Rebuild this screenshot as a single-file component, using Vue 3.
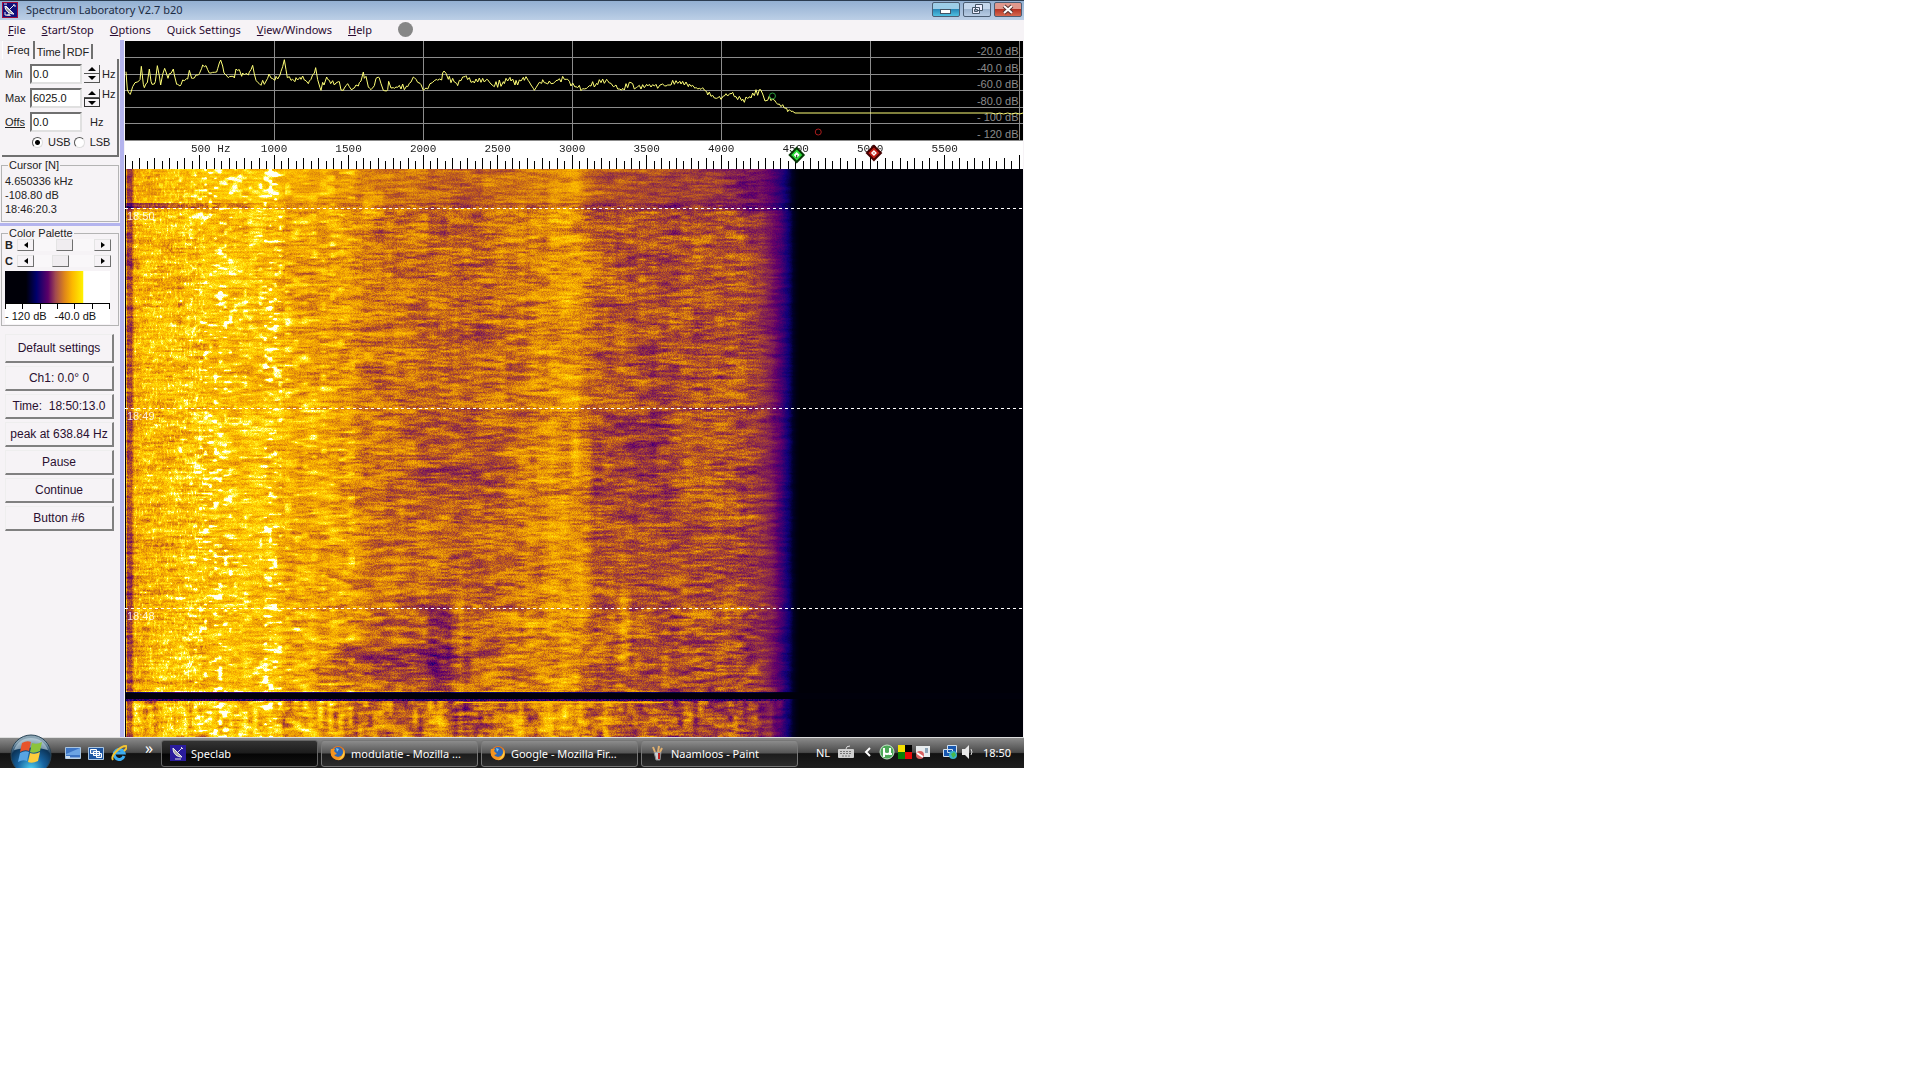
<script setup>
import { ref, onMounted } from "vue";

const menus = [
  { key: "F", rest: "ile" },
  { key: "S", rest: "tart/Stop" },
  { key: "O", rest: "ptions" },
  { key: "", rest: "Quick Settings" },
  { key: "V", rest: "iew/Windows" },
  { key: "H", rest: "elp" },
];

const fMin = ref("0.0");
const fMax = ref("6025.0");
const fOffs = ref("0.0");
const sideband = ref("USB");
const brightness = ref(51);
const contrast = ref(42);

const actions = ["Default settings", "Ch1: 0.0° 0", "Time:  18:50:13.0", "peak at 638.84 Hz", "Pause", "Continue", "Button #6"];

const tasks = [
  { title: "Speclab", icon: "dish", active: true },
  { title: "modulatie - Mozilla ...", icon: "fox" },
  { title: "Google - Mozilla Fir...", icon: "fox" },
  { title: "Naamloos - Paint", icon: "paint" },
];

// frequency axis
const SPAN = 6025;
const pct = (hz) => `${(hz / SPAN) * 100}%`;
const gridHz = [1000, 2000, 3000, 4000, 5000, 6000];
const gridDb = [
  { y: 16, label: "-20.0 dB" },
  { y: 33, label: "-40.0 dB" },
  { y: 49, label: "-60.0 dB" },
  { y: 66, label: "-80.0 dB" },
  { y: 82, label: "- 100 dB" },
  { y: 99, label: "- 120 dB" },
];
const ticks = Array.from({ length: 121 }, (_, i) => i * 50);
const tickTop = (hz) => (hz % 500 === 0 ? 14 : hz % 100 === 0 ? 17 : 20);
const labelsHz = [500, 1000, 1500, 2000, 2500, 3000, 3500, 4000, 4500, 5000, 5500];
const timeMarks = [
  { y: 39, label: "18:50" },
  { y: 239, label: "18:49" },
  { y: 439, label: "18:48" },
];

// pseudo random value per cell
const hash = (x, y) => {
  let h = Math.imul(x + 101, 374761393) ^ Math.imul(y + 57, 668265263);
  h = Math.imul(h ^ (h >>> 13), 1274126177);
  return ((h ^ (h >>> 16)) >>> 0) / 4294967295;
};

const noise = (x, y, seed) => {
  const ix = Math.floor(x);
  const iy = Math.floor(y);
  const fx = x - ix;
  const fy = y - iy;
  const sx = fx * fx * (3 - 2 * fx);
  const sy = fy * fy * (3 - 2 * fy);
  const s = seed * 977;
  const a = hash(ix + s, iy);
  const b = hash(ix + 1 + s, iy);
  const c = hash(ix + s, iy + 1);
  const d = hash(ix + 1 + s, iy + 1);
  return a + (b - a) * sx + (c - a) * sy + (a - b - c + d) * sx * sy - 0.5;
};

const lerpTable = (table, x) => {
  for (let i = 1; i < table.length; i++) {
    if (x <= table[i][0]) {
      const [x0, y0] = table[i - 1];
      const [x1, y1] = table[i];
      return y0 + ((y1 - y0) * (x - x0)) / (x1 - x0);
    }
  }
  return table[table.length - 1][1];
};

// 1 between lo and hi, falling to 0 over soft pixels outside
const band = (v, lo, hi, soft) => Math.max(0, Math.min(1, 1 - Math.max(lo - v, v - hi) / soft));

// spectrum envelope, in thirds of a pixel
const envelope = [
  [3, 92], [7, 147], [16, 160], [30, 125], [45, 116], [49, 76], [55, 130], [67, 125], [73, 84], [81, 130], [91, 122], [97, 74],
  [107, 132], [119, 82], [129, 112], [145, 84], [155, 130], [165, 135], [185, 113], [193, 88], [200, 112], [220, 102], [230, 82], [243, 74],
  [253, 96], [275, 93], [287, 57], [297, 96], [310, 110], [325, 106], [337, 88], [350, 106], [370, 102], [383, 73], [393, 118], [403, 128],
  [425, 117], [432, 99], [450, 118], [465, 102], [478, 56], [487, 110], [510, 122], [525, 109], [550, 128], [572, 80], [585, 140], [597, 132],
  [605, 108], [617, 128], [640, 122], [655, 148], [668, 128], [680, 147], [700, 135], [715, 93], [730, 138], [745, 138], [760, 108], [775, 148],
  [785, 150], [791, 121], [805, 140], [845, 135], [865, 108], [885, 127], [895, 148], [915, 128], [935, 115], [950, 117], [957, 90], [970, 115],
  [995, 127], [1020, 107], [1045, 121], [1085, 115], [1105, 135], [1135, 122], [1155, 109], [1170, 132], [1195, 109], [1210, 119], [1225, 142],
  [1250, 127], [1285, 127], [1300, 117], [1325, 115], [1350, 138], [1385, 142], [1415, 127], [1445, 115], [1465, 137], [1490, 147], [1513, 124],
  [1535, 139], [1565, 130], [1605, 132], [1635, 132], [1665, 121], [1690, 137], [1710, 142], [1745, 152], [1775, 172], [1795, 165], [1815, 157],
  [1850, 179], [1875, 167], [1907, 146], [1920, 180], [1942, 174], [1985, 202], [2010, 216],
];

const tracePoints = () => {
  const pts = [];
  let k = 0;
  for (let x = 3; x < 2010; x += 5) {
    const peak = envelope.find((p) => Math.abs(p[0] - x) < 3);
    const jitter = (hash(k, 5) - 0.5) * 14 + (k % 2 ? 4 : -4);
    const y = peak ? peak[1] : lerpTable(envelope, x) + jitter;
    pts.push(`${peak ? peak[0] : x},${y.toFixed(0)}`);
    k++;
  }
  pts.push("2010,216");
  for (let x = 2600; x < 2694; x += 12) pts.push(`${x},${216 + (k++ % 2) * 3}`);
  pts.push("2694,216");
  return pts.join(" ");
};
const trace = tracePoints();

// waterfall
const palette = [
  [0, 0, 0, 8], [0.1, 0, 0, 40], [0.2, 16, 0, 120], [0.34, 98, 0, 106], [0.46, 140, 44, 72], [0.56, 186, 88, 32],
  [0.66, 228, 144, 8], [0.76, 252, 184, 0], [0.86, 255, 226, 10], [0.94, 255, 250, 110], [1, 255, 255, 245],
];
const columnLevel = [
  [0, 0], [1, 0.7], [2, 0.5], [6, 0.5], [9, 0.72], [50, 0.77], [90, 0.78], [150, 0.78], [157, 0.72], [200, 0.7], [228, 0.67], [238, 0.62],
  [320, 0.59], [335, 0.58], [395, 0.62], [430, 0.67], [452, 0.69], [470, 0.57], [540, 0.53], [560, 0.55], [600, 0.55], [632, 0.5],
  [646, 0.41], [656, 0.29], [664, 0.17], [671, 0.03], [674, 0],
];

const color = (v) => {
  const t = Math.min(1, Math.max(0, v));
  let i = 1;
  while (i < palette.length - 1 && t > palette[i][0]) i++;
  const a = palette[i - 1];
  const b = palette[i];
  const f = (t - a[0]) / (b[0] - a[0]);
  return [a[1] + (b[1] - a[1]) * f, a[2] + (b[2] - a[2]) * f, a[3] + (b[3] - a[3]) * f];
};

const levelAt = (x, y, base) => {
  const edge = x > 620 ? Math.max(0, (674 - x) / 54) : 1;
  let n = noise(x / 11, y / 1.8, 1) * 0.2 + noise(x / 26, y / 4, 2) * 0.13;
  n += noise(x / 6, y / 50, 3) * 0.06 + (hash(x, y) - 0.5) * 0.12;
  if (y < 36) n *= 0.7;

  // voice harmonics on the low side
  if (x > 8 && x < 160) {
    const blob = noise(x / 5, y / 3, 5) + noise(x / 12, y / 40, 6) * 0.2;
    const lane = band(x, 80, 94, 16) + band(x, 140, 152, 10) + band(x, 108, 122, 12) * 0.4 + band(x, 58, 62, 10) * 0.4;
    if (blob > 0.12) n += (blob - 0.12) * (0.2 + lane * 0.85);
    if (x < 80) n += Math.max(0, noise(x / 1.4, y / 3, 7)) * 0.32 - 0.02;
  }
  if (x >= 160 && x < 230) n += Math.max(0, noise(x / 9, y / 3.5, 8) - 0.12) * 0.5;

  // the first minute has more contrast
  if (y > 420 && y < 523 && x > 160) n += noise(x / 9, y / 4, 9) * 0.14 * band(y, 440, 523, 20);
  n -= 0.13 * band(x, 306, 322, 14) * band(y, 440, 510, 20);
  n -= 0.1 * band(x, 200, 310, 30) * band(y, 480, 505, 10);
  n += 0.1 * band(x, 329, 335, 5) * band(y, 440, 523, 12);
  n += 0.1 * band(x, 497, 502, 5) * band(y, 430, 500, 12);
  n -= 0.05 * band(x, 300, 370, 20) * band(y, 260, 330, 30);
  n -= 0.05 * band(x, 470, 540, 20) * band(y, 260, 330, 30);

  if (y > 33 && y < 39) n -= 0.07 + 0.2 * band(x, 0, 30, 130);
  n += 0.1 * band(x, 240, 256, 5) * band(y, 24, 42, 6);
  if (y < 42 && x > 540) n -= (Math.min(x, 630) - 540) / 650;
  if (y > 530) n += noise(x / 5, y / 22, 10) * 0.24 + noise(x / 5, y / 4, 11) * 0.14;
  return base + n * edge + (x > 610 ? noise(3, y / 3, 12) * 0.08 * edge : 0);
};

const waterfall = ref(null);

const drawWaterfall = () => {
  const canvas = waterfall.value;
  const w = canvas.width;
  const h = canvas.height;
  const ctx = canvas.getContext("2d");
  const img = ctx.createImageData(w, h);
  const base = Array.from({ length: w }, (_, x) => lerpTable(columnLevel, x));
  for (let y = 0; y < h; y++) {
    for (let x = 0; x < w; x++) {
      let v = x > 0 && x < 674 ? levelAt(x, y, base[x]) : base[x];
      if (y >= 523 && y < 530) v = y === 523 ? v * 0.3 : 0.01;
      else if (y === 530 || y === 531) v = Math.min(v, 0.15 + hash(x, y) * 0.2);
      if (y === 522 && x < 450) v += 0.08;
      if (y === 533 && x < 538 && x > 330) v = 0.78;
      const [r, g, b] = color(v);
      const i = (y * w + x) * 4;
      img.data[i] = r;
      img.data[i + 1] = g;
      img.data[i + 2] = b;
      img.data[i + 3] = 255;
    }
  }
  ctx.putImageData(img, 0, 0);
};

onMounted(drawWaterfall);
</script>

<template>
  <div class="desktop">
    <header class="titlebar">
      <svg class="app-icon" width="16" height="16" viewBox="0 0 16 16">
        <rect x="0.5" y="0.5" width="15" height="15" fill="#10107c" stroke="#a01040" />
        <path d="M3 4c0 5 4 8 9 8z" fill="#999" stroke="#fff" />
        <path d="M4 4l8 8M8 7l4-4M2 2h3M11 3h2v2M3 10v3h3" fill="none" stroke="#eee" />
        <path d="M4 14h5l-2-3z" fill="#ccc" />
      </svg>
      <span class="title">Spectrum Laboratory V2.7 b20</span>
      <div class="window-buttons">
        <button class="min" aria-label="Minimize"><svg width="26" height="13"><rect x="7.500" y="6.500" width="10" height="4" fill="#fff" stroke="#456" /></svg></button>
        <button class="restore" aria-label="Restore"><svg width="26" height="13"><path d="M11.500 1.500h7v6h-7zM8.500 4.500h7v6h-7z" fill="#eef" stroke="#456" /><path d="M10.500 6.500h3v2h-3z" fill="#9ab" stroke="#456" /></svg></button>
        <button class="close" aria-label="Close"><svg width="26" height="13"><path d="M9 3l8 7M17 3l-8 7" stroke="#533" stroke-width="4" /><path d="M9 3l8 7M17 3l-8 7" stroke="#fff" stroke-width="2" /></svg></button>
      </div>
    </header>

    <nav class="menubar">
      <button v-for="m in menus" :key="m.rest"><u>{{ m.key }}</u>{{ m.rest }}</button>
      <span class="led"></span>
    </nav>

    <main class="work">
      <aside class="sidebar">
        <section class="freq">
          <div class="tabs">
            <button class="active">Freq</button>
            <button>Time</button>
            <button>RDF</button>
          </div>
          <div class="freq-body">
            <div class="field">
              <label for="fmin">Min</label>
              <input id="fmin" v-model="fMin" type="text" />
              <span class="spin"><button class="up" aria-label="Min up"></button><button class="down" aria-label="Min down"></button></span>
              <span>Hz</span>
            </div>
            <div class="field">
              <label for="fmax">Max</label>
              <input id="fmax" v-model="fMax" type="text" />
              <span class="spin"><button class="up" aria-label="Max up"></button><button class="down focused" aria-label="Max down"></button></span>
              <span class="raised">Hz</span>
            </div>
            <div class="field">
              <label for="foffs"><u>Offs</u></label>
              <input id="foffs" v-model="fOffs" type="text" />
              <span class="unit">Hz</span>
            </div>
            <div class="bands">
              <label><input v-model="sideband" type="radio" value="USB" />USB</label>
              <label><input v-model="sideband" type="radio" value="LSB" />LSB</label>
            </div>
          </div>
        </section>

        <fieldset class="cursor">
          <legend>Cursor [N]</legend>
          <p>4.650336 kHz</p>
          <p>-108.80 dB</p>
          <p>18:46:20.3</p>
        </fieldset>

        <div class="divider"></div>

        <fieldset class="palette">
          <legend>Color Palette</legend>
          <div class="slider">
            <label for="bright">B</label>
            <button class="left" aria-label="Less brightness"></button>
            <input id="bright" v-model="brightness" type="range" />
            <button class="right" aria-label="More brightness"></button>
          </div>
          <div class="slider">
            <label for="contr">C</label>
            <button class="left" aria-label="Less contrast"></button>
            <input id="contr" v-model="contrast" type="range" />
            <button class="right" aria-label="More contrast"></button>
          </div>
          <div class="ramp">
            <div class="ramp-colors"></div>
            <div class="ramp-ticks"><i v-for="n in 7" :key="n"></i></div>
            <div class="ramp-labels"><span>- 120 dB</span><span>-40.0 dB</span></div>
          </div>
        </fieldset>

        <div class="actions">
          <button v-for="a in actions" :key="a">{{ a }}</button>
        </div>
      </aside>

      <section class="display">
        <svg class="spectrum" width="100%" height="100">
          <rect width="100%" height="100" fill="#000" />
          <g stroke="#8c8c8c" shape-rendering="crispEdges">
            <line v-for="d in gridDb" :key="d.y" x1="0" x2="100%" :y1="d.y" :y2="d.y" />
            <line v-for="hz in gridHz" :key="hz" :x1="pct(hz)" :x2="pct(hz)" y1="0" y2="100" />
          </g>
          <text v-for="d in gridDb" :key="d.label" class="db" x="99.500%" :y="d.y - 2">{{ d.label }}</text>
          <svg width="100%" height="100" viewBox="0 0 2694 300" preserveAspectRatio="none">
            <polyline :points="trace" fill="none" stroke="#ffff78" vector-effect="non-scaling-stroke" />
          </svg>
          <circle cx="72.100%" cy="55" r="3" fill="none" stroke="#2c9c3c" />
          <circle cx="77.200%" cy="91" r="3" fill="none" stroke="#a81c1c" />
        </svg>

        <svg class="axis" width="100%" height="28">
          <g stroke="#000" shape-rendering="crispEdges">
            <line v-for="hz in ticks" :key="hz" :x1="pct(hz)" :x2="pct(hz)" :y1="tickTop(hz)" y2="28" />
          </g>
          <text v-for="hz in labelsHz" :key="hz" :x="pct(hz === 500 ? 575 : hz)" y="11">{{ hz === 500 ? "500 Hz" : hz }}</text>
          <svg x="74.800%" y="14" overflow="visible">
            <path d="M0-7l7 7-7 7-7-7z" fill="#2fe03a" stroke="#063806" stroke-width="2" />
            <path d="M0-3l3 3-3 3-3-3z" fill="#fff" /><path d="M0 0v3" stroke="#063806" />
          </svg>
          <svg x="83.400%" y="12" overflow="visible">
            <path d="M0-7l7 7-7 7-7-7z" fill="#c01c14" stroke="#400" stroke-width="2" />
            <path d="M0-3l3 3-3 3-3-3z" fill="#fff" /><path d="M-1 0h2" stroke="#c44" />
          </svg>
        </svg>

        <div class="waterfall">
          <canvas ref="waterfall" width="898" height="568"></canvas>
          <svg class="overlay" width="100%" height="100%">
            <g v-for="t in timeMarks" :key="t.label">
              <line x1="0" x2="100%" :y1="t.y" :y2="t.y" stroke="#fff" stroke-dasharray="3 3" shape-rendering="crispEdges" />
              <text x="2" :y="t.y + 12">{{ t.label }}</text>
            </g>
          </svg>
        </div>
      </section>
    </main>

    <footer class="taskbar">
      <button class="start" aria-label="Start">
        <svg width="42" height="36" viewBox="0 0 42 36">
          <defs>
            <radialGradient id="orb" cx="50%" cy="85%" r="75%">
              <stop offset="0" stop-color="#4fd0f0" />
              <stop offset="0.45" stop-color="#1763a0" />
              <stop offset="0.8" stop-color="#0c3458" />
              <stop offset="1" stop-color="#8aa4b4" />
            </radialGradient>
          </defs>
          <circle cx="21" cy="21" r="20" fill="url(#orb)" stroke="#2a4456" />
          <path d="M4 16a18 18 0 0 1 34 0q-16-5-34 0z" fill="#c8dce6" opacity="0.6" />
          <path d="M12 9q5-3 9-1l-2 9q-4-2-9 1z" fill="#e8542c" />
          <path d="M22 9q5 2 10-1l-2 9q-6 3-10 1z" fill="#8cc43c" />
          <path d="M10 19q5-3 9-1l-2 9q-4-2-9 1z" fill="#58a4e4" />
          <path d="M20 19q5 2 10-1l-2 9q-6 3-10 1z" fill="#fccc3c" />
        </svg>
      </button>
      <div class="quick">
        <button aria-label="Show desktop">
          <svg width="16" height="16"><path d="M.5 2.500h15v11h-15z" fill="#3c74c4" stroke="#a8c4e0" /><path d="M1 9l14-6v7H1z" fill="#6ca4e4" /><path d="M1 13h14" stroke="#cde" /><path d="M1 12h4" stroke="#cde" stroke-width="2" /></svg>
        </button>
        <button aria-label="Switch windows">
          <svg width="16" height="16"><path d="M.5 2.500h15v12h-15z" fill="#1c54a0" stroke="#a8c4e0" /><path d="M2.500 4.500h6v4h-6zM5.500 6.500h6v4h-6zM8.500 8.500h5v4h-5z" fill="#4878bc" stroke="#fff" /></svg>
        </button>
        <button aria-label="Internet Explorer">
          <svg width="16" height="16"><path d="M13 11a5 5 0 1 1 0-3H5" fill="none" stroke="#3cacf0" stroke-width="3" /><path d="M2 15C-1 11 9 1 15 1c2 2-1 4-2 5" fill="none" stroke="#f4c430" stroke-width="2" /></svg>
        </button>
      </div>
      <button class="more" aria-label="More">»</button>
      <div class="tasks">
        <button v-for="t in tasks" :key="t.title" :class="{ active: t.active }">
          <svg v-if="t.icon === 'dish'" width="16" height="16" viewBox="0 0 16 16">
            <rect width="16" height="16" fill="#2a1c9c" />
            <path d="M3 3c0 6 4 9 9 9z" fill="#aaa" stroke="#eee" />
            <path d="M8 7l4-4M11 2l2 2M5 14h6" stroke="#ddd" />
          </svg>
          <svg v-else-if="t.icon === 'fox'" width="16" height="16" viewBox="0 0 16 16">
            <circle cx="8" cy="8" r="7" fill="#e87818" />
            <circle cx="8" cy="7" r="5" fill="#2c68b8" />
            <path d="M6 3l3 1-2 3z" fill="#7cc4f0" />
            <path d="M1 4q-2 9 6 11 7 1 8-6 0-4-2-6 2 9-5 9-3 0-4-2l3-1-3-3 1-2z" fill="#f49420" />
            <path d="M14 5q2 8-6 10 5-3 6-10z" fill="#fcd448" />
          </svg>
          <svg v-else width="16" height="16" viewBox="0 0 16 16">
            <path d="M4 7h7l-1 8H6z" fill="#c8d0d4" stroke="#888" />
            <path d="M5 7L3 2M8 7l1-6M10 7l2-4" stroke="#e0b070" stroke-width="2" />
            <path d="M9 8v6" stroke="#c02020" stroke-width="2" />
          </svg>
          <span>{{ t.title }}</span>
        </button>
      </div>
      <div class="tray">
        <span class="lang">NL</span>
        <svg width="16" height="16"><path d="M8 5q0-3 4-3" fill="none" stroke="#ddd" /><rect y="5" width="16" height="9" rx="1" fill="#d0d0d0" /><path d="M2 7.500h12M2 9.500h12M4 12h8" stroke="#777" stroke-dasharray="2 1" /></svg>
        <button class="expand" aria-label="Show hidden icons"><svg width="8" height="10"><path d="M6 1L2 5l4 4" fill="none" stroke="#fff" stroke-width="2" /></svg></button>
        <div class="tray-icons">
          <svg width="16" height="16"><circle cx="8" cy="8" r="7" fill="#4ca858" stroke="#c4e4c8" /><path d="M5 13V4v4q0 2 3 2t3-2V4v6h2" fill="none" stroke="#fff" stroke-width="2" /></svg>
          <svg width="14" height="14"><path d="M0 0h7v7H0z" fill="#f4e000" /><path d="M7 0h7v7H7z" fill="#000" /><path d="M0 7h7v7H0z" fill="#088008" /><path d="M7 7h7v7H7z" fill="#e80808" /></svg>
          <svg width="16" height="16"><path d="M1 2h14v11H5L1 9z" fill="#e8ecee" /><path d="M10 4v5h3V4z" fill="#8ca4b8" /><circle cx="5" cy="11" r="4" fill="#d86060" /><path d="M2 9l6 4" stroke="#fff" stroke-width="2" /></svg>
        </div>
        <div class="tray-icons system">
          <svg width="16" height="16"><path d="M5.500 1.500h9v7h-9zM1.500 5.500h9v7h-9z" fill="#1858b0" stroke="#cfe0f0" /><circle cx="11" cy="11" r="4" fill="#38b0c8" /><path d="M9 10l3-2 2 3-3 3z" fill="#48b848" /></svg>
          <svg width="14" height="16"><path d="M1 5h3l4-4v14l-4-4H1z" fill="#e8e8e8" /><path d="M10 5q2 3 0 6" fill="none" stroke="#ddd" /></svg>
        </div>
        <time>18:50</time>
      </div>
    </footer>
  </div>
</template>

<style>
body {
  margin: 0;
  background: #fff;
}
</style>

<style scoped>
.desktop {
  display: flex;
  flex-direction: column;
  width: calc(100% * 8 / 15);
  min-width: 960px;
  min-height: calc(100vh * 32 / 45);
  font-family: "Liberation Sans", Arial, sans-serif;
  font-size: 11px;
  color: #222;
  background: #f6f3f6;
}

button {
  padding: 0;
  border: none;
  background: none;
  font: inherit;
  color: inherit;
}

svg {
  display: block;
}

.titlebar {
  display: flex;
  align-items: center;
  height: 20px;
  box-sizing: border-box;
  padding: 0 2px 2px;
  border-top: 1px solid #2b3c50;
  background: linear-gradient(#93b0d2, #bccfe6);
}

.title {
  flex: 1;
  padding-left: 8px;
  font-family: "Noto Sans", "Open Sans", sans-serif;
  font-size: 11px;
  color: #1c2c44;
}

.window-buttons {
  display: flex;
  gap: 3px;
}

.window-buttons button {
  width: 28px;
  height: 15px;
  border: 1px solid #4c5e74;
  border-radius: 2px;
}

.min {
  background: linear-gradient(#9ccde8 45%, #2888b8 50%, #50c0e0);
}

.restore {
  background: linear-gradient(#c4d6ec 45%, #9cb4d0 50%, #b8cce4);
}

.close {
  background: linear-gradient(#e0988c 45%, #b83424 50%, #d46850);
}

.menubar {
  display: flex;
  align-items: center;
  gap: 16px;
  height: 20px;
  box-sizing: border-box;
  padding: 0 0 1px 8px;
  font-family: "Noto Sans", "Open Sans", sans-serif;
  font-size: 11px;
  color: #2a0a30;
}

.led {
  width: 15px;
  height: 15px;
  margin-left: 10px;
  border-radius: 50%;
  background: #868686;
}

.work {
  display: flex;
  flex: 1;
}

.sidebar {
  width: 120px;
  flex: none;
  border-right: 4px solid #b4b4ee;
}

.freq {
  margin: 1px 1px 0 2px;
}

.tabs {
  display: flex;
  align-items: flex-end;
  height: 18px;
  border-left: 1px solid #fff;
}

.tabs button {
  height: 15px;
  padding: 0 2px;
  border-right: 2px solid #707070;
}

.tabs .active {
  height: 18px;
  padding: 0 3px 0 4px;
}

.freq-body {
  display: flex;
  flex-direction: column;
  gap: 4px;
  padding: 5px 0 7px 3px;
  border-right: 2px solid #707070;
  border-bottom: 2px solid #707070;
}

.field {
  display: flex;
  align-items: center;
  height: 20px;
}

.field label {
  width: 25px;
}

.field input {
  width: 52px;
  height: 20px;
  box-sizing: border-box;
  padding: 0 1px;
  border: 2px solid;
  border-color: #707070 #e0e0e0 #e0e0e0 #707070;
  background: #fff;
  font: inherit;
  color: #111;
}

.spin {
  display: flex;
  flex-direction: column;
  margin: 0 2px;
}

.spin button {
  display: flex;
  align-items: center;
  justify-content: center;
  width: 16px;
  height: 9px;
  box-sizing: border-box;
  border-right: 1px solid #555;
  border-bottom: 1px solid #555;
}

.spin .focused {
  border: 1px solid #333;
}

.up::before,
.down::before,
.left::before,
.right::before {
  content: "";
  border: 4px solid transparent;
}

.up::before {
  border-width: 0 4px 4px;
  border-bottom-color: #000;
}

.down::before {
  border-width: 4px 4px 0;
  border-top-color: #000;
}

.left::before {
  border-width: 3px 4px 3px 0;
  border-right-color: #000;
}

.right::before {
  border-width: 3px 0 3px 4px;
  border-left-color: #000;
}

.raised {
  align-self: flex-start;
}

.unit {
  padding-left: 8px;
}

.bands {
  display: flex;
  gap: 3px;
  padding-left: 27px;
}

.bands label {
  display: flex;
  align-items: center;
  gap: 5px;
}

.bands input {
  appearance: none;
  width: 11px;
  height: 11px;
  margin: 0;
  border: 1px solid;
  border-color: #555 #ddd #ddd #555;
  border-radius: 50%;
  background: #fff;
}

.bands input:checked {
  background: radial-gradient(#000 2px, #fff 3px);
}

fieldset {
  margin: 0 1px;
  padding: 0 3px;
  border: 1px solid #b4b4b4;
}

legend {
  margin-left: 3px;
  padding: 0 1px;
  line-height: 12px;
}

.cursor {
  margin-top: 2px;
  padding-bottom: 5px;
}

.cursor p {
  margin: 0;
  line-height: 14px;
}

.cursor legend + p {
  padding-top: 3px;
}

.divider {
  height: 3px;
  margin: 1px 0;
  background: #b4b4ee;
}

.palette {
  padding-bottom: 1px;
}

.slider {
  display: flex;
  align-items: center;
  width: 106px;
  height: 12px;
  margin-bottom: 4px;
}

.slider label {
  width: 12px;
  font-weight: bold;
}

.slider button {
  display: flex;
  align-items: center;
  justify-content: center;
  width: 17px;
  height: 12px;
  box-sizing: border-box;
  border: 1px solid;
  border-color: #e4e4e4 #707070 #707070 #e4e4e4;
}

.slider input {
  appearance: none;
  flex: 1;
  min-width: 0;
  height: 12px;
  margin: 0;
  background: #f9f7f9;
}

.slider input::-webkit-slider-thumb {
  appearance: none;
  width: 17px;
  height: 12px;
  border: 1px solid;
  border-color: #e4e4e4 #707070 #707070 #e4e4e4;
  background: #f0edf0;
}

.ramp {
  width: 105px;
  background: #fff;
}

.ramp-colors {
  height: 32px;
  background: linear-gradient(90deg, #000008 20%, #00006c 30%, #5c0068 41%, #a04850 48%, #e08818 57%, #fcb800 64%, #fff000 74%, #fff 75%);
}

.ramp-ticks {
  display: flex;
  justify-content: space-between;
  height: 5px;
  border-top: 1px solid #000;
}

.ramp-ticks i {
  width: 1px;
  background: #000;
}

.ramp-labels {
  display: flex;
  gap: 8px;
  line-height: 15px;
  color: #111;
}

.actions {
  display: flex;
  flex-direction: column;
  gap: 3px;
  padding: 8px 6px 0 5px;
  font-size: 12px;
}

.actions button {
  height: 25px;
  border: 1px solid;
  border-width: 1px 2px 2px 1px;
  border-color: #eee #808080 #808080 #eee;
  white-space: pre;
  color: #2a1030;
}

.actions button:first-child {
  height: 29px;
}

.display {
  display: flex;
  flex: 1;
  flex-direction: column;
  min-width: 0;
  margin: 1px 1px 0 1px;
  background: #fff;
}

.spectrum {
  flex: none;
}

.db {
  font-size: 11px;
  text-anchor: end;
  fill: #8c8c8c;
}

.axis {
  position: relative;
  z-index: 1;
  flex: none;
}

.axis text {
  font-family: "Liberation Mono", "Courier New", monospace;
  font-size: 11px;
  text-anchor: middle;
  fill: #222;
}

.waterfall {
  position: relative;
  display: flex;
  flex: 1;
}

canvas {
  width: 100%;
  min-width: 0;
}

.overlay {
  position: absolute;
  inset: 0;
}

.overlay text {
  font-size: 11px;
  fill: #fff;
  fill-opacity: 0.85;
}

.taskbar {
  display: flex;
  align-items: center;
  height: 31px;
  box-sizing: border-box;
  padding-left: 10px;
  border-top: 1px solid #ddd;
  background: linear-gradient(#8a8a8a, #4a4a4a 48%, #121212 52%, #1e1e1e);
  font-family: "Noto Sans", "Open Sans", sans-serif;
  font-size: 11px;
  color: #fff;
}

.start {
  align-self: flex-end;
  height: 34px;
  overflow: hidden;
}

.quick {
  display: flex;
  gap: 7px;
  margin-left: 13px;
}

.more {
  width: 12px;
  margin: 0 6px 10px 16px;
  font-size: 16px;
  line-height: 16px;
}

.tasks {
  display: flex;
  flex: 1;
  gap: 3px;
  min-width: 0;
}

.tasks button {
  display: flex;
  align-items: center;
  gap: 5px;
  flex: 1;
  min-width: 0;
  height: 27px;
  padding: 0 8px;
  border: 1px solid #777;
  border-radius: 3px;
  background: linear-gradient(#8c8c8c, #555 48%, #1c1c1c 52%, #2c2c2c);
  white-space: nowrap;
}

.tasks .active {
  border-color: #666;
  background: linear-gradient(#333, #1c1c1c 48%, #050505 52%, #111);
}

.tray {
  display: flex;
  align-items: center;
  padding: 0 13px 2px 18px;
}

.lang {
  width: 22px;
}

.expand {
  margin: 0 7px 0 10px;
}

.tray-icons {
  display: flex;
  align-items: center;
  gap: 3px;
}

.system {
  margin: 0 8px 0 11px;
}
</style>
